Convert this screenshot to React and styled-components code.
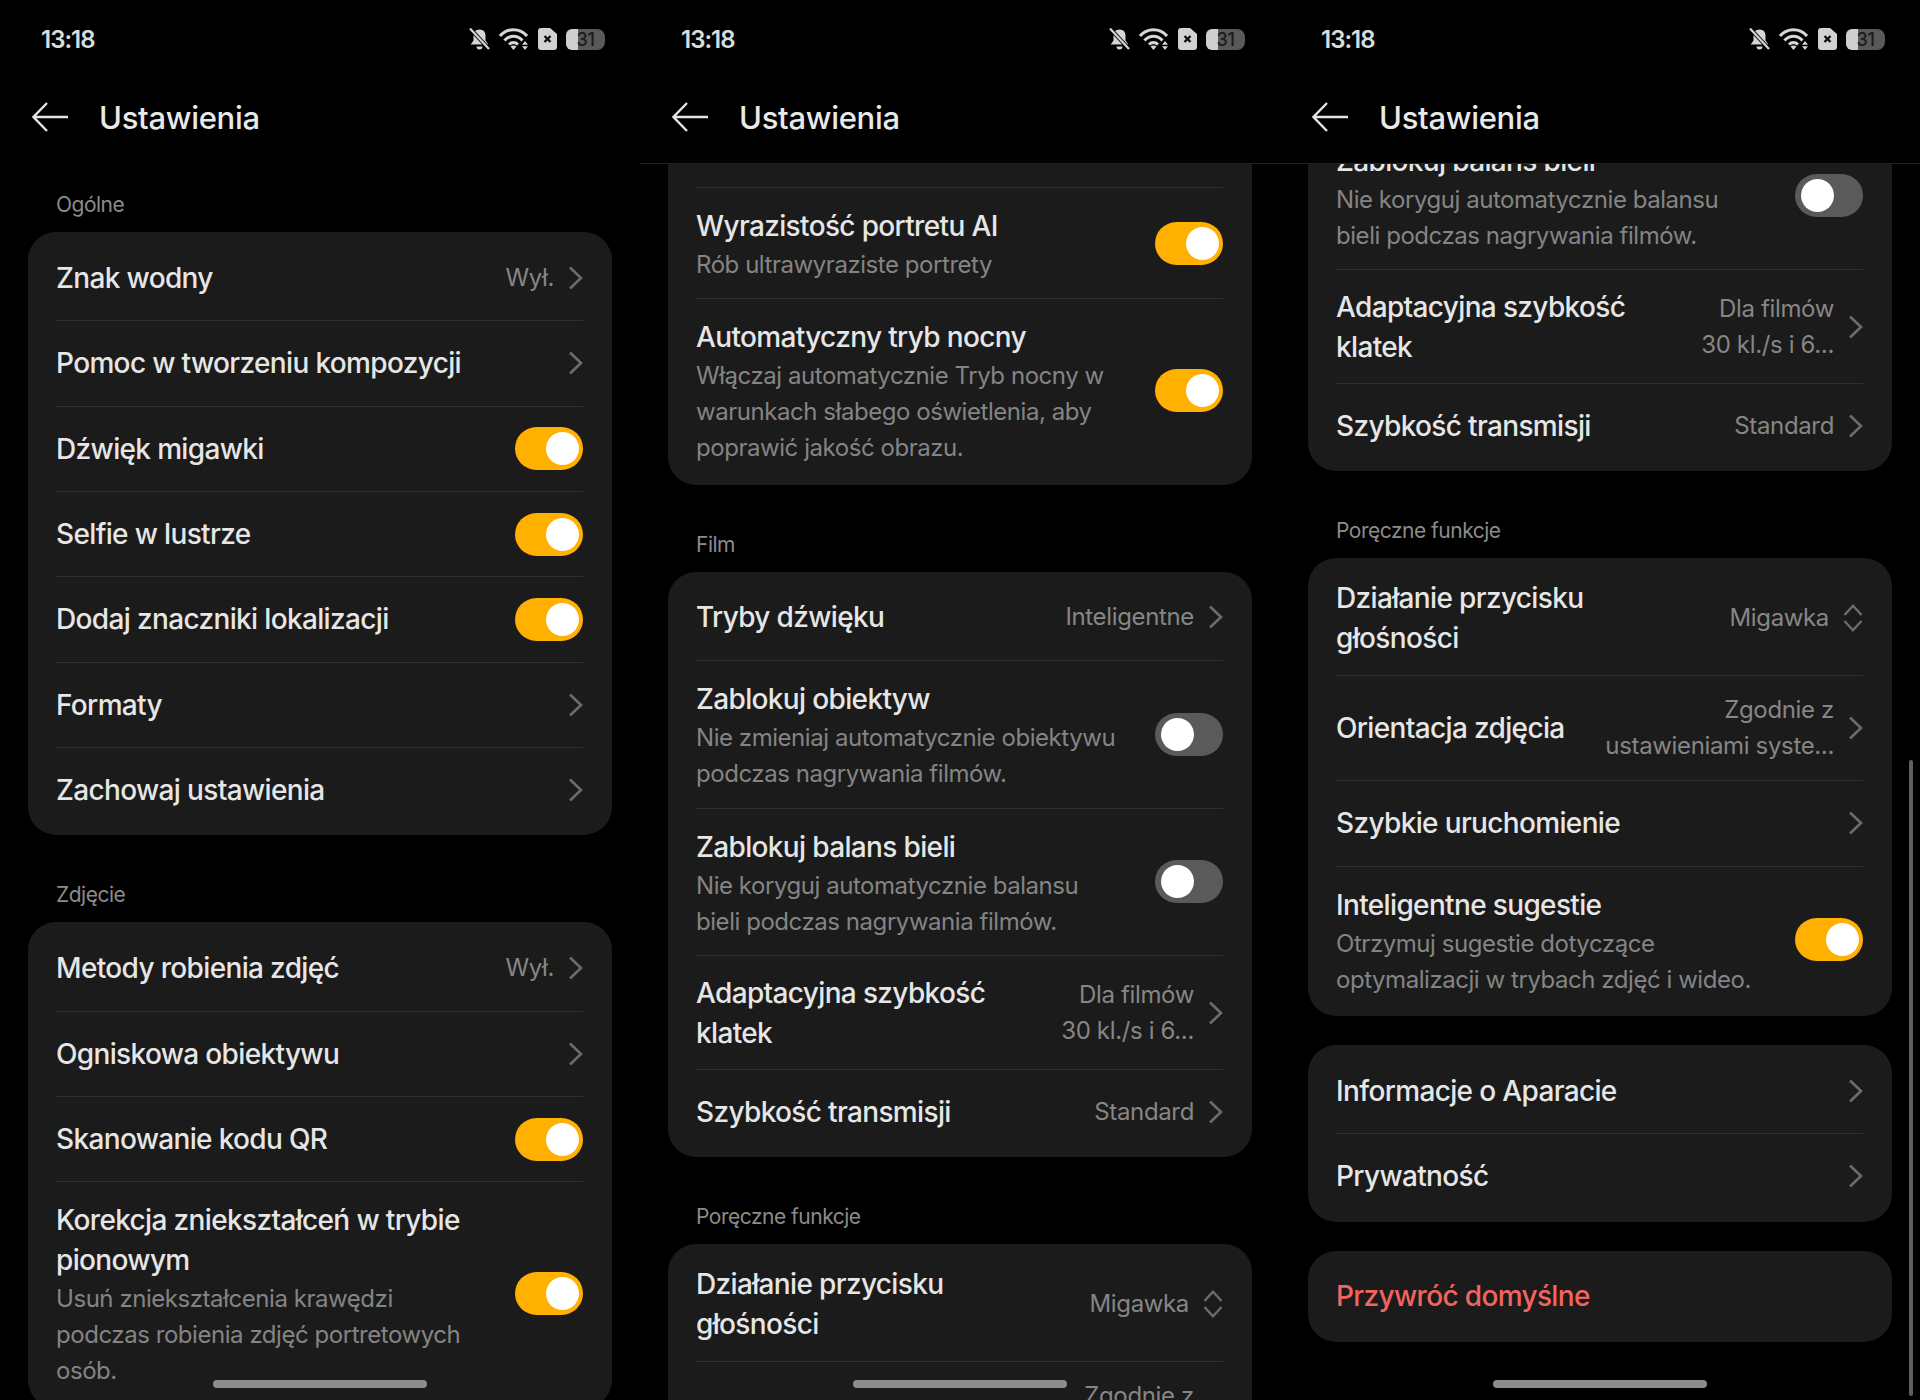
import React from 'react'
import styled, { createGlobalStyle } from 'styled-components'

const Global = createGlobalStyle`
  html, body { margin: 0; padding: 0; background: #000; }
  body { font-family: Inter, "Noto Sans", sans-serif; -webkit-font-smoothing: antialiased; }
`

const Screens = styled.div`
  display: grid;
  grid-template-columns: repeat(3, 640px);
  width: 1920px;
  height: 1400px;
  overflow: hidden;
`

const Phone = styled.div`
  position: relative;
  display: flex;
  flex-direction: column;
  height: 1400px;
  overflow: hidden;
  background: #000;
`

const StatusBar = styled.div`
  display: flex;
  align-items: center;
  justify-content: space-between;
  height: 78px;
  padding: 0 35px 0 41px;
  flex: none;
`

const Time = styled.span`
  font-size: 24px;
  font-weight: 600;
  letter-spacing: -1px;
  color: #dcdcdc;
`

const StatusIcons = styled.div`
  display: flex;
  align-items: center;
  gap: 9px;
`

const Battery = styled.div`
  position: relative;
  display: flex;
  align-items: center;
  justify-content: center;
  width: 39px;
  height: 21px;
  border-radius: 6px 8px 8px 6px;
  overflow: hidden;
  background: linear-gradient(90deg, #cfcfcf 0 12px, #595959 12px);
  font-size: 18px;
  font-weight: 500;
  letter-spacing: -0.5px;
  color: #1c1c1c;
`

const TopBar = styled.div`
  display: flex;
  align-items: center;
  gap: 31px;
  height: 86px;
  padding: 0 0 7px 32px;
  flex: none;
  box-sizing: border-box;
  border-bottom: 1px solid ${p => (p.$lined ? '#222' : 'transparent')};
`

const Heading = styled.h1`
  margin: 0;
  font-size: 31px;
  font-weight: 500;
  letter-spacing: -0.3px;
  color: #e9e9e9;
`

const Scroll = styled.div`
  flex: 1;
  min-height: 0;
  overflow: hidden;
`

const List = styled.div`
  margin-top: ${p => p.$offset}px;
  padding: 10px 28px 0;
`

const Section = styled.section`
  & + & { margin-top: 29px; }
`

const SectionLabel = styled.div`
  height: 30px;
  padding: 16px 28px 12px;
  font-size: 21px;
  line-height: 30px;
  letter-spacing: -0.5px;
  color: #8b8b8b;
`

const Card = styled.div`
  padding: 3px 29px 3px 28px;
  border-radius: 28px;
  background: #1b1b1b;
`

const Row = styled.div`
  display: flex;
  align-items: center;
  justify-content: space-between;
  gap: 31px;
  box-sizing: border-box;
  min-height: 85.33px;
  padding: ${p => p.$pad || '0'};
  & + & { border-top: 1px solid #303030; }
`

const RowText = styled.div`
  flex: 1;
  min-width: 0;
  padding: ${p => (p.$hasSub ? '18px 0 15.4px' : '0')};
`

const Title = styled.div`
  font-size: 28px;
  font-weight: 500;
  line-height: 40px;
  letter-spacing: -0.65px;
  color: ${p => (p.$danger ? '#f2655f' : '#e6e6e6')};
`

const Sub = styled.div`
  margin-top: 1px;
  font-size: 24px;
  line-height: 36px;
  letter-spacing: -0.45px;
  color: #848484;
`

const Trailing = styled.div`
  display: flex;
  align-items: center;
  gap: 14px;
  flex: none;
`

const Value = styled.div`
  font-size: 24px;
  line-height: 36px;
  letter-spacing: -0.35px;
  text-align: right;
  white-space: pre-line;
  color: #868686;
`

const Track = styled.div`
  display: flex;
  align-items: center;
  justify-content: ${p => (p.$on ? 'flex-end' : 'flex-start')};
  flex: none;
  box-sizing: border-box;
  width: 68px;
  height: 43px;
  padding: ${p => (p.$on ? '0 4px 0 0' : '0 0 0 6px')};
  border-radius: 22px;
  background: ${p => (p.$on ? '#ffb000' : '#5a5a5a')};
`

const Knob = styled.div`
  width: 33px;
  height: 33px;
  border-radius: 50%;
  background: #fff;
`

const HomeBar = styled.div`
  position: absolute;
  left: 213px;
  bottom: 12px;
  width: 214px;
  height: 8px;
  border-radius: 4px;
  background: #8c8c8c;
`

const ScrollThumb = styled.div`
  position: absolute;
  right: 7px;
  top: 760px;
  bottom: 4px;
  width: 4px;
  border-radius: 2px;
  background: #5f5f5f;
`

const Bell = () => (
  <svg width="21" height="22" viewBox="0 0 21 22">
    <path d="M10.5 1.500c4 0 6 2.800 6 6.500v4.500l2.800 4H1.700l2.800-4V8c0-3.700 2-6.500 6-6.500z" fill="#d6d6d6" />
    <path d="M7.500 18.500h6a3 3 0 0 1-6 0z" fill="#d6d6d6" />
    <path d="M1 0.500 20 21" stroke="#000" strokeWidth="4" />
    <path d="M1 0.500 20 21" stroke="#d6d6d6" strokeWidth="2.200" />
  </svg>
)

const Wifi = () => (
  <svg width="30" height="22" viewBox="0 0 30 22" fill="none">
    <path d="M1 8C8-.5 21-.5 28 8" stroke="#d6d6d6" strokeWidth="3" />
    <path d="M5.500 12.500C10.500 6.800 18.500 6.800 23.500 12.500" stroke="#d6d6d6" strokeWidth="3" />
    <path d="M10 16.500c2.600-2.600 6.400-2.600 9 0" stroke="#d6d6d6" strokeWidth="3" />
    <path d="M14.500 22l-3-3.600c1.900-1.200 4.100-1.200 6 0z" fill="#d6d6d6" />
    <path d="M26 13l3 3.800h-6zM26 22l-3-3.800h6z" fill="#d6d6d6" />
  </svg>
)

const Sim = () => (
  <svg width="19" height="22" viewBox="0 0 19 22">
    <path d="M3 0h9l7 6v13a3 3 0 0 1-3 3H3a3 3 0 0 1-3-3V3a3 3 0 0 1 3-3z" fill="#d2d2d2" />
    <path d="M6.500 8l6 6M12.500 8l-6 6" stroke="#111" strokeWidth="2.400" />
  </svg>
)

const BackArrow = () => (
  <svg width="36" height="30" viewBox="0 0 36 30" fill="none">
    <path d="M15 1 1.500 15 15 29M1.500 15H36" stroke="#e4e4e4" strokeWidth="2.400" />
  </svg>
)

const Chevron = () => (
  <svg width="15" height="24" viewBox="0 0 15 24" fill="none">
    <path d="M2 1.500 13 12 2 22.500" stroke="#6c6c6c" strokeWidth="2.600" />
  </svg>
)

const UpDown = () => (
  <svg width="20" height="28" viewBox="0 0 20 28" fill="none">
    <path d="M1.500 11 10 1.800 18.500 11M1.500 17 10 26.200 18.500 17" stroke="#6c6c6c" strokeWidth="2.400" />
  </svg>
)

const Toggle = ({ on }) => (
  <Track $on={on}>
    <Knob />
  </Track>
)

function Item({ title, sub, value, on, off, arrow, updown, pad, danger }) {
  return (
    <Row $pad={pad}>
      <RowText $hasSub={!!sub}>
        {title && <Title $danger={danger}>{title}</Title>}
        {sub && <Sub>{sub}</Sub>}
      </RowText>
      {on && <Toggle on />}
      {off && <Toggle />}
      {(value || arrow || updown) && (
        <Trailing>
          {value && <Value>{value}</Value>}
          {arrow && <Chevron />}
          {updown && <UpDown />}
        </Trailing>
      )}
    </Row>
  )
}

const firstPage = [
  {
    label: 'Ogólne',
    items: [
      { title: 'Znak wodny', value: 'Wył.', arrow: true },
      { title: 'Pomoc w tworzeniu kompozycji', arrow: true },
      { title: 'Dźwięk migawki', on: true },
      { title: 'Selfie w lustrze', on: true },
      { title: 'Dodaj znaczniki lokalizacji', on: true },
      { title: 'Formaty', arrow: true },
      { title: 'Zachowaj ustawienia', arrow: true },
    ],
  },
  {
    label: 'Zdjęcie',
    items: [
      { title: 'Metody robienia zdjęć', value: 'Wył.', arrow: true },
      { title: 'Ogniskowa obiektywu', arrow: true },
      { title: 'Skanowanie kodu QR', on: true },
      {
        title: 'Korekcja zniekształceń w trybie pionowym',
        sub: 'Usuń zniekształcenia krawędzi podczas robienia zdjęć portretowych osób.',
        on: true,
      },
    ],
  },
]

const laterPage = [
  {
    items: [
      {},
      { title: 'Wyrazistość portretu AI', sub: 'Rób ultrawyraziste portrety', on: true },
      {
        title: 'Automatyczny tryb nocny',
        sub: 'Włączaj automatycznie Tryb nocny w warunkach słabego oświetlenia, aby poprawić jakość obrazu.',
        on: true,
      },
    ],
  },
  {
    label: 'Film',
    items: [
      { title: 'Tryby dźwięku', value: 'Inteligentne', arrow: true },
      {
        title: 'Zablokuj obiektyw',
        sub: 'Nie zmieniaj automatycznie obiektywu podczas nagrywania filmów.',
        off: true,
      },
      {
        title: 'Zablokuj balans bieli',
        sub: 'Nie koryguj automatycznie balansu bieli podczas nagrywania filmów.',
        off: true,
      },
      { title: 'Adaptacyjna szybkość klatek', value: 'Dla filmów\n30 kl./s i 6...', arrow: true, pad: '17px 0 16px' },
      { title: 'Szybkość transmisji', value: 'Standard', arrow: true },
    ],
  },
  {
    label: 'Poręczne funkcje',
    items: [
      { title: 'Działanie przycisku głośności', value: 'Migawka', updown: true, pad: '17px 0' },
      { title: 'Orientacja zdjęcia', value: 'Zgodnie z\nustawieniami syste...', arrow: true, pad: '16px 0' },
      { title: 'Szybkie uruchomienie', arrow: true },
      {
        title: 'Inteligentne sugestie',
        sub: 'Otrzymuj sugestie dotyczące optymalizacji w trybach zdjęć i wideo.',
        on: true,
      },
    ],
  },
  { items: [{ title: 'Informacje o Aparacie', arrow: true }, { title: 'Prywatność', arrow: true }] },
  { items: [{ title: 'Przywróć domyślne', danger: true }] },
]

function Screen({ sections, offset = 0, lined, thumb }) {
  return (
    <Phone>
      <StatusBar>
        <Time>13:18</Time>
        <StatusIcons>
          <Bell />
          <Wifi />
          <Sim />
          <Battery>31</Battery>
        </StatusIcons>
      </StatusBar>
      <TopBar $lined={lined}>
        <BackArrow />
        <Heading>Ustawienia</Heading>
      </TopBar>
      <Scroll>
        <List $offset={offset}>
          {sections.map((section, i) => (
            <Section key={i}>
              {section.label && <SectionLabel>{section.label}</SectionLabel>}
              <Card>
                {section.items.map((item, j) => (
                  <Item key={j} {...item} />
                ))}
              </Card>
            </Section>
          ))}
        </List>
      </Scroll>
      {thumb && <ScrollThumb />}
      <HomeBar />
    </Phone>
  )
}

export default function App() {
  return (
    <>
      <Global />
      <Screens>
        <Screen sections={firstPage} />
        <Screen sections={laterPage} offset={-75.33} lined />
        <Screen sections={laterPage} offset={-761.33} lined thumb />
      </Screens>
    </>
  )
}
